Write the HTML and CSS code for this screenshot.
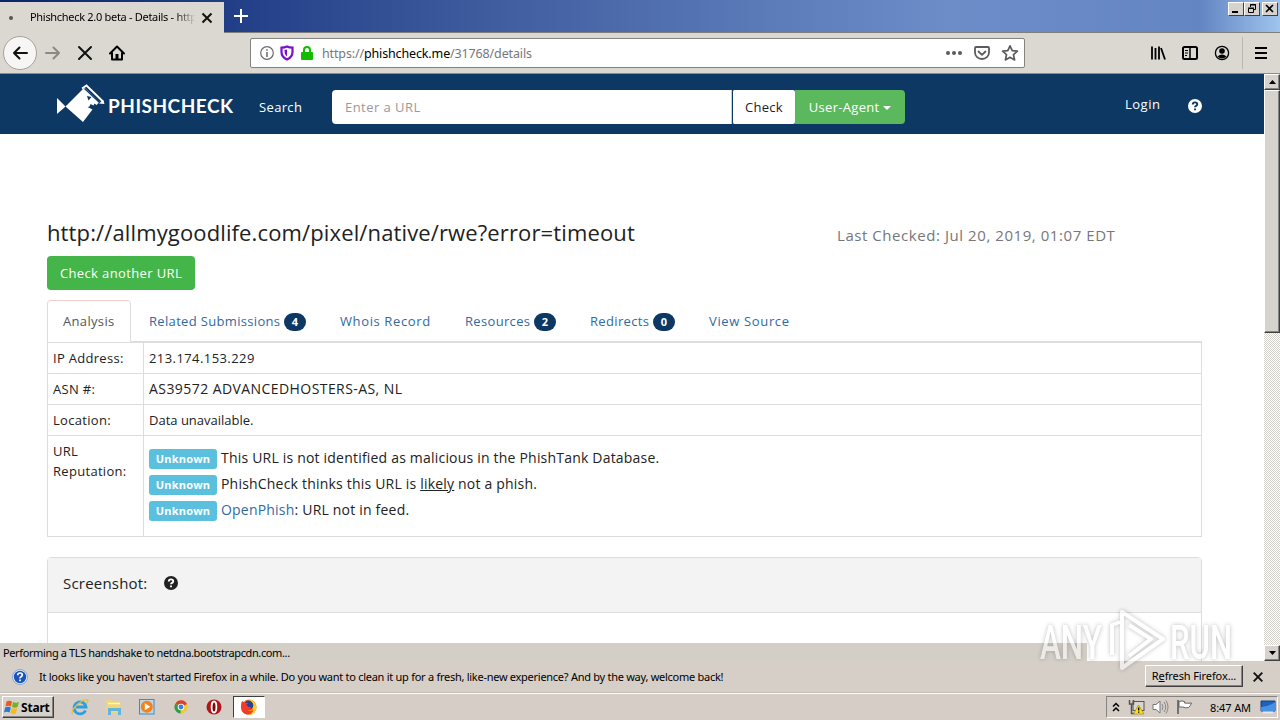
FILE: index.html
```html
<!DOCTYPE html>
<html lang="en">
<head>
  <meta charset="UTF-8">
  <meta name="viewport" content="width=device-width, initial-scale=1.0">
  <title>Phishcheck 2.0 beta - Details</title>
  <link rel="stylesheet" href="styles.css">
</head>
<body>
  <!-- Browser window -->
  <div class="titlebar">
    <div class="tab">
      <span class="tab-dot"></span>
      <span class="tab-title">Phishcheck 2.0 beta - Details - http</span>
      <svg class="tab-close" width="12" height="12" viewBox="0 0 12 12"><path d="M1.5 1.5l9 9M10.5 1.5l-9 9" stroke="#111" stroke-width="2"/></svg>
    </div>
    <svg class="new-tab" width="14" height="14" viewBox="0 0 14 14"><path d="M7 0v14M0 7h14" stroke="#fff" stroke-width="2"/></svg>
    <div class="window-buttons">
      <span class="win-btn"><svg width="14" height="12" viewBox="0 0 14 12"><path d="M3 9h6" stroke="#000" stroke-width="2"/></svg></span>
      <span class="win-btn"><svg width="14" height="12" viewBox="0 0 14 12"><path d="M5.500 4V1.500h5v5H9M5 2h6M3.500 5.500h5v4h-5zM3 5h6" fill="none" stroke="#000"/></svg></span>
      <span class="win-btn win-close"><svg width="14" height="12" viewBox="0 0 14 12"><path d="M3 2l7 7M10 2L3 9" stroke="#000" stroke-width="1.600"/></svg></span>
    </div>
  </div>

  <div class="toolbar">
    <span class="back"><svg width="16" height="16" viewBox="0 0 16 16"><path d="M15 8H2M7.500 2.500L2 8l5.500 5.500" fill="none" stroke="#111" stroke-width="2" stroke-linecap="round" stroke-linejoin="round"/></svg></span>
    <svg class="forward" width="16" height="16" viewBox="0 0 16 16"><path d="M1 8h13M8.500 2.500L14 8l-5.500 5.500" fill="none" stroke="#8b8985" stroke-width="2" stroke-linecap="round" stroke-linejoin="round"/></svg>
    <svg class="stop" width="16" height="16" viewBox="0 0 16 16"><path d="M2 2l12 12M14 2L2 14" stroke="#111" stroke-width="2" stroke-linecap="round"/></svg>
    <svg class="home" width="16" height="16" viewBox="0 0 16 16"><path d="M1 8.500L8 1.500l7 7M3 8v6.500h10V8" fill="none" stroke="#000" stroke-width="2" stroke-linecap="round" stroke-linejoin="round"/><path d="M6.500 14V9h3v5z" fill="#000"/></svg>

    <div class="urlbar">
      <svg width="14" height="14" viewBox="0 0 14 14"><circle cx="7" cy="7" r="6.300" fill="none" stroke="#6b6b6b" stroke-width="1.200"/><path d="M7 6v5M7 3.300v1.500" stroke="#6b6b6b" stroke-width="1.500"/></svg>
      <svg class="shield" width="14" height="16" viewBox="0 0 14 16"><path d="M7 1.500C5.500 2.200 3.500 2.600 1.500 2.600V7c0 3.500 2 6 5.500 7.500 3.500-1.500 5.500-4 5.500-7.500V2.600C10.500 2.600 8.500 2.200 7 1.500z" fill="#fff" stroke="#7a10c8" stroke-width="2.200"/><path d="M7 4.500v7C5 10 4.500 8.500 4.500 5z" fill="#7a10c8"/></svg>
      <svg class="lock" width="12" height="14" viewBox="0 0 12 14"><path d="M3 7V4a3 3 0 0 1 6 0v3" fill="none" stroke="#12bc00" stroke-width="2"/><rect y="6" width="12" height="8" rx="1" fill="#12bc00"/></svg>
      <span class="url">https://<b>phishcheck.me</b>/31768/details</span>
      <span class="url-actions">
        <svg width="16" height="16" viewBox="0 0 16 16" fill="#5b5b5b"><circle cx="2" cy="8" r="2"/><circle cx="8" cy="8" r="2"/><circle cx="14" cy="8" r="2"/></svg>
        <svg width="16" height="16" viewBox="0 0 16 16" fill="none" stroke="#5b5b5b" stroke-width="1.800" stroke-linecap="round" stroke-linejoin="round"><path d="M2 2h12q1 0 1 1v4.500a7 6.500 0 0 1-14 0V3q0-1 1-1z"/><path d="M4.500 6.500L8 9.800l3.500-3.300"/></svg>
        <svg width="18" height="18" viewBox="0 0 18 18"><path d="M9 1.800l2.200 4.800 5.200.6-3.900 3.500 1.100 5.200L9 13.300l-4.600 2.600 1.100-5.200-3.900-3.500 5.200-.6z" fill="none" stroke="#5b5b5b" stroke-width="1.700" stroke-linejoin="round"/></svg>
      </span>
    </div>

    <div class="tools">
      <svg width="16" height="16" viewBox="0 0 16 16"><path d="M2 1.500v13M5.500 3v11.500M9 1.500v13M11 3l4 11.500" stroke="#000" stroke-width="1.800"/></svg>
      <svg width="16" height="16" viewBox="0 0 16 16"><rect x="1" y="2" width="14" height="12" rx="1.500" fill="none" stroke="#000" stroke-width="2"/><path d="M8 2v12" stroke="#000" stroke-width="1.500"/><path d="M3 5.500h3M3 8h3M3 10.500h2" stroke="#000"/></svg>
      <svg width="16" height="16" viewBox="0 0 16 16"><circle cx="8" cy="8" r="6.600" fill="none" stroke="#000" stroke-width="1.300"/><circle cx="8" cy="6" r="2.800"/><path d="M3.500 11.500q4.500-4 9 0-4.500 4-9 0z"/></svg>
      <span class="divider"></span>
      <svg width="12" height="14" viewBox="0 0 12 14"><path d="M0 2h12M0 7h12M0 12h12" stroke="#000" stroke-width="2"/></svg>
    </div>
  </div>

  <!-- Web page -->
  <div class="viewport">
    <div class="page">
      <nav class="navbar">
        <svg class="logo" width="178" height="40" viewBox="0 0 178 40">
          <path d="M1 14l8.500 8.500L1 30z" fill="#fff"/>
          <path d="M28.500 3.500L43.500 18l-3 3-2-1.500-1 2-3-1.500-1 2.500-2 .5 5 2.500-9.500 12.500L9.500 22.500z" fill="#fff"/>
          <path d="M31 12l4.500 1-3 3.500z" fill="#0d3863"/>
          <path d="M26 4.500l4.500-3L47.500 18" fill="none" stroke="#fff" stroke-width="2"/>
          <path d="M28.500 4.500L44 19" stroke="#0d3863" stroke-width="1.200"/>
          <path d="M43 19.500l5.500.5-1.500-4z" fill="#fff"/>
          <text x="52" y="29" textLength="125" lengthAdjust="spacing">PHISHCHECK</text>
        </svg>
        <a class="nav-search">Search</a>
        <div class="search-group">
          <span class="search-input">Enter a URL</span>
          <button class="btn-check">Check</button>
          <button class="btn-agent">User-Agent <i class="caret"></i></button>
        </div>
        <a class="login">Login</a>
        <svg class="nav-help" width="14" height="14" viewBox="0 0 14 14"><circle cx="7" cy="7" r="7" fill="#fff"/><path d="M4.800 5.400q0-2 2.200-2t2.200 1.800q0 1-1.100 1.600T7 8.300M7 9.400v1.800" fill="none" stroke="#0d3863" stroke-width="1.900"/></svg>
      </nav>

      <main class="container">
        <div class="heading">
          <h1>http://allmygoodlife.com/pixel/native/rwe?error=timeout</h1>
          <span class="checked">Last Checked: Jul 20, 2019, 01:07 EDT</span>
        </div>
        <button class="btn-another">Check another URL</button>

        <ul class="tabs">
          <li class="active">Analysis</li>
          <li class="t-related">Related Submissions <span class="badge">4</span></li>
          <li class="t-whois">Whois Record</li>
          <li class="t-resources">Resources <span class="badge">2</span></li>
          <li class="t-redirects">Redirects <span class="badge">0</span></li>
          <li class="t-source">View Source</li>
        </ul>

        <table class="details">
          <tr><td class="key">IP Address:</td><td class="ip">213.174.153.229</td></tr>
          <tr><td>ASN #:</td><td class="asn">AS39572 ADVANCEDHOSTERS-AS, NL</td></tr>
          <tr><td>Location:</td><td class="location">Data unavailable.</td></tr>
          <tr>
            <td>URL Reputation:</td>
            <td class="reputation">
              <p><span class="label">Unknown</span> <span>This URL is not identified as malicious in the PhishTank Database.</span></p>
              <p><span class="label">Unknown</span> <span>PhishCheck thinks this URL is <u>likely</u> not a phish.</span></p>
              <p><span class="label">Unknown</span> <span><a>OpenPhish</a>: URL not in feed.</span></p>
            </td>
          </tr>
        </table>

        <div class="panel">
          <div class="panel-heading">
            <span>Screenshot:</span>
            <svg width="14" height="14" viewBox="0 0 14 14"><circle cx="7" cy="7" r="7" fill="#222"/><path d="M4.800 5.400q0-2 2.200-2t2.200 1.800q0 1-1.100 1.600T7 8.300M7 9.400v1.800" fill="none" stroke="#fff" stroke-width="1.900"/></svg>
          </div>
        </div>
      </main>
    </div>
    <div class="scrollbar">
      <span class="scroll-btn"><svg width="7" height="4" viewBox="0 0 7 4"><path d="M0 4h7L3.500 0z"/></svg></span>
      <span class="thumb"></span>
      <span class="scroll-btn scroll-down"><svg width="7" height="4" viewBox="0 0 7 4"><path d="M0 0h7L3.500 4z"/></svg></span>
    </div>
    <div class="status">Performing a TLS handshake to netdna.bootstrapcdn.com...</div>
  </div>

  <div class="infobar">
    <svg width="16" height="16" viewBox="0 0 16 16"><circle cx="8" cy="8" r="7.500" fill="#e8f0fa" stroke="#8aa6cf"/><circle cx="8" cy="8" r="6.200" fill="#1c53bd"/><path d="M5.700 6.300q0-2.300 2.300-2.300t2.300 2q0 1-1.200 1.700T8 9.300M8 10.400v1.900" fill="none" stroke="#fff" stroke-width="1.700"/></svg>
    <span class="info-text">It looks like you haven't started Firefox in a while. Do you want to clean it up for a fresh, like-new experience? And by the way, welcome back!</span>
    <button class="refresh">R<u>e</u>fresh Firefox...</button>
    <svg class="info-close" width="10" height="10" viewBox="0 0 10 10"><path d="M.7.7l8.600 8.600M9.300.7L.7 9.300" stroke="#111" stroke-width="1.900"/></svg>
  </div>

  <!-- Windows taskbar -->
  <div class="taskbar">
    <button class="start">
      <svg width="16" height="16" viewBox="0 0 16 16"><path d="M2.500 2.500Q5 .8 8 2.500L7 7.500Q4.500 6 1.500 7.500z" fill="#ee5a1c"/><path d="M9 3q3 1.500 6 0l-1.500 5Q11 9.500 8 8z" fill="#71b32b"/><path d="M1.200 8.500Q4 7 6.800 8.500l-1.200 5Q3 12 0 13.500z" fill="#2878d5"/><path d="M7.800 9q2.800 1.500 5.500 0l-1.500 5.500Q9 16 6.500 14z" fill="#fbbb17"/></svg>
      Start
    </button>
    <div class="launch">
      <svg width="18" height="18" viewBox="0 0 18 18"><path d="M14.500 12.500A6 6 0 1 1 15 9H5" fill="none" stroke="#2ca0df" stroke-width="2.800"/><path d="M1.500 16C-1 13 10 .5 16.500 2q1 1-1 4" fill="none" stroke="#e7bd3b" stroke-width="1.300"/></svg>
      <svg width="18" height="18" viewBox="0 0 18 18"><path d="M1.500 2h6l1.500 2h6.500v11h-14z" fill="#f1d676"/><path d="M3 5.500h12" stroke="#fff7ce" stroke-width="1.500"/><path d="M3 17v-7h13v7h-3v-4H6v4z" fill="#62b5df"/></svg>
      <svg width="18" height="18" viewBox="0 0 18 18"><rect x="1.500" y="1.500" width="14.500" height="14.500" fill="#b7d9f0" stroke="#408bc5"/><circle cx="8.800" cy="8.800" r="6" fill="#f58216"/><path d="M6.800 5.300v7l5.500-3.500z" fill="#fff"/></svg>
      <svg width="18" height="18" viewBox="0 0 18 18"><circle cx="9" cy="9" r="6.500" fill="#f5c929"/><path d="M9 9L3.400 5.700A6.500 6.500 0 0 1 15 6z" fill="#de3e31"/><path d="M9 9L3.300 5.800A6.500 6.500 0 0 0 8.500 15.500z" fill="#2b9c4c"/><circle cx="9" cy="9" r="3.300" fill="#fff"/><circle cx="9" cy="9" r="2.400" fill="#3f7ee0"/></svg>
      <svg width="18" height="18" viewBox="0 0 18 18"><circle cx="9" cy="9" r="7.500" fill="#b01618"/><ellipse cx="9" cy="9" rx="2.400" ry="5.500" fill="#7a0b0d" stroke="#fff" stroke-width="1.800"/></svg>
      <span class="running"><svg width="18" height="18" viewBox="0 0 18 18"><circle cx="9" cy="9.200" r="7.600" fill="#ff8a13"/><path d="M9 1.200q3 0 5 2.500 3 4 2 8Q14 17 9 17q5-3 4-7-1-3-4-4.500z" fill="#ffcf28"/><circle cx="8.500" cy="7.300" r="4.800" fill="#28429c"/><path d="M2 3l2.500 1.500L8 5 6.500 7l2 2 3 .5q-1 3-4 2.500 3 2 6 0-2 5-7 4.500Q1 15 1 9q0-4 1-6z" fill="#ef3c2c"/></svg></span>
    </div>
    <div class="tray">
      <svg width="8" height="10" viewBox="0 0 8 10"><path d="M1 4.500l3-3 3 3M1 9l3-3 3 3" fill="none" stroke="#000" stroke-width="1.500"/></svg>
      <svg class="net" width="17" height="16" viewBox="0 0 17 16"><rect x="5" y="2.500" width="11" height="9" fill="#d8d6d2" stroke="#555"/><path d="M1.500 1v4h4V1M3.500 5v9.500H7" fill="none" stroke="#555" stroke-width="1.500"/><path d="M10.500 6L16 15H5.500z" fill="#ffdf18" stroke="#a98900" stroke-width=".7"/><path d="M10.700 8.500v3M10.700 12.500v1.200" stroke="#000" stroke-width="1.300"/></svg>
      <svg class="vol" width="17" height="16" viewBox="0 0 17 16"><path d="M1 5.500h3L8 2v12l-4-3.500H1z" fill="#fff" stroke="#777"/><path d="M10 5q2 3 0 6M12 3q3.500 5 0 10M14 1.500q4 6.500 0 13" fill="none" stroke="#888"/></svg>
      <svg class="flag" width="17" height="16" viewBox="0 0 17 16"><path d="M3 2.500q3-1 5.500 0V4q3 .5 7 0-1 3-3 4.500-3 1-5.500-.5H3z" fill="#fff" stroke="#666"/><path d="M2 1v14" stroke="#555" stroke-width="1.500"/></svg>
      <span class="clock">8:47 AM</span>
      <svg width="16" height="14" viewBox="0 0 16 14"><path d="M1 1h14v10H1z" fill="#1d62c0" stroke="#123e7c"/><path d="M1 7q7 0 14-5v9H1z" fill="#4a92e0"/><path d="M3 12.500h10" stroke="#dfe7ef" stroke-width="2"/></svg>
    </div>
  </div>

  <svg class="watermark" width="200" height="70" viewBox="0 0 200 70">
    <text x="4" y="54" textLength="62" lengthAdjust="spacingAndGlyphs">ANY</text>
    <path d="M76 50V20l8-3M86 7v56l41-29zM93 20l22 14-22 17"/>
    <text x="134" y="54" textLength="62" lengthAdjust="spacingAndGlyphs">RUN</text>
  </svg>
</body>
</html>
```
FILE: styles.css
```css
* {
  box-sizing: border-box;
}
body {
  margin: 0;
  height: 720px;
  overflow: hidden;
  display: flex;
  flex-direction: column;
  font-family: "Noto Sans", sans-serif;
  font-size: 11px;
  color: #000;
  background: #d5cec7;
}
svg {
  display: block;
  flex: none;
  overflow: visible;
}
button {
  font-family: inherit;
  margin: 0;
  white-space: nowrap;
}
.titlebar {
  height: 33px;
  flex: none;
  display: flex;
  background: linear-gradient(90deg, #0b2569 0, #223e87 230px, #4b69a9 600px, #6d8dc9 950px, #6385c2 1200px, #9fc4ee 1280px);
  border-bottom: 1px solid #807f7c;
}
.tab {
  width: 224px;
  height: 31px;
  margin-top: 2px;
  padding-left: 9px;
  display: flex;
  align-items: center;
  background: #dbd8d2;
}
.tab-dot {
  width: 4px;
  height: 4px;
  border-radius: 50%;
  background: #555;
  margin-right: 17px;
}
.tab-title {
  width: 165px;
  margin-top: -2px;
  white-space: nowrap;
  letter-spacing: -0.3px;
  -webkit-mask-image: linear-gradient(90deg, #000 145px, transparent 166px);
}
.tab-close {
  margin-left: 6px;
}
.new-tab {
  margin: 9px 0 0 10px;
}
.window-buttons {
  margin: 2px 2px 0 auto;
  display: flex;
}
.win-btn {
  width: 16px;
  height: 14px;
  background: #d6d3ce;
  border: 1px solid;
  border-color: #fff #404040 #404040 #fff;
}
.win-close {
  margin-left: 2px;
}
.toolbar {
  height: 41px;
  flex: none;
  display: flex;
  align-items: center;
  background: #dbd8d2;
  border-bottom: 1px solid #8a8d90;
}
.back {
  width: 34px;
  height: 34px;
  margin-left: 3px;
  border: 1px solid #a5a29d;
  border-radius: 50%;
  background: #f7f6f5;
  display: flex;
  align-items: center;
  justify-content: center;
}
.forward {
  margin-left: 8px;
}
.stop, .home {
  margin-left: 16px;
}
.urlbar {
  width: 775px;
  height: 30px;
  margin-left: 125px;
  padding: 0 5px 0 9px;
  display: flex;
  align-items: center;
  background: #fff;
  border: 1px solid #85837f;
  border-radius: 2px;
}
.shield {
  margin-left: 6px;
}
.lock {
  margin-left: 7px;
}
.url {
  margin-left: 9px;
  font-size: 12.5px;
  letter-spacing: -0.14px;
  color: #777;
}
.url b {
  font-weight: 400;
  color: #000;
}
.url-actions {
  margin-left: auto;
  display: flex;
  align-items: center;
  gap: 12px;
}
.url-actions svg:last-child {
  margin-left: -1px;
}
.tools {
  margin: 0 13px 0 auto;
  display: flex;
  align-items: center;
  gap: 16px;
}
.divider {
  width: 1px;
  height: 32px;
  margin: 0 -4px 0 -4px;
  background: #bbb8b2;
}
.viewport {
  height: 587px;
  flex: none;
  display: flex;
  position: relative;
  overflow: hidden;
}
.page {
  width: 1264px;
  background: #fff;
  font-family: "Open Sans", sans-serif;
  font-size: 14px;
  line-height: 20px;
  color: #222;
}
.navbar {
  height: 60px;
  padding-left: 56px;
  display: flex;
  align-items: flex-start;
  background: #0d3863;
  color: #fff;
}
.logo {
  margin-top: 10px;
}
.logo text {
  font-family: Lato, sans-serif;
  font-size: 19px;
  font-weight: 700;
  fill: #fff;
}
.nav-search {
  width: 73px;
  margin: 23px 0 0 25px;
  font-size: 13px;
  letter-spacing: 0.35px;
}
.search-group {
  height: 34px;
  margin-top: 16px;
  display: flex;
}
.search-input {
  width: 400px;
  padding: 7px 13px;
  background: #fff;
  color: #999;
  border-right: 1px solid #ccc;
  border-radius: 4px 0 0 4px;
  font-size: 13px;
  letter-spacing: 0.45px;
}
.btn-check, .btn-agent {
  border: 0;
  padding: 0;
  font-size: 13px;
  letter-spacing: 0.3px;
}
.btn-check {
  width: 63px;
  background: #fff;
  color: #222;
  border-left: 1px solid #0d3863;
  border-radius: 2px;
}
.btn-agent {
  width: 110px;
  background: #5cb85c;
  color: #fff;
  border-radius: 0 4px 4px 0;
}
.caret {
  display: inline-block;
  border: 4px solid transparent;
  border-top-color: #fff;
  border-bottom: 0;
  vertical-align: 2px;
}
.login {
  margin: 20px 0 0 220px;
  width: 63px;
  font-size: 13px;
  letter-spacing: 0.5px;
}
.nav-help {
  margin-top: 25px;
}
.container {
  width: 1155px;
  margin-left: 47px;
  padding-top: 85px;
}
.heading {
  height: 37px;
  display: flex;
}
h1 {
  width: 790px;
  margin: 0;
  font-size: 22px;
  font-weight: 400;
  letter-spacing: 0.13px;
  line-height: 26px;
  white-space: nowrap;
}
.checked {
  margin-top: 6px;
  font-size: 15px;
  letter-spacing: 0.56px;
  color: #777;
  white-space: nowrap;
}
.btn-another {
  display: block;
  width: 148px;
  height: 34px;
  border: 0;
  border-radius: 4px;
  background: #43b549;
  color: #fff;
  font-size: 13px;
  letter-spacing: 0.37px;
}
.tabs {
  height: 42px;
  margin: 10px 0 0;
  padding: 0;
  display: flex;
  list-style: none;
  font-size: 13px;
  letter-spacing: 0.33px;
  color: #316aa3;
}
.tabs li {
  padding-top: 11px;
  white-space: nowrap;
  border-bottom: 1px solid #ddd;
}
.tabs .active {
  width: 84px;
  height: 43px;
  padding-left: 15px;
  padding-top: 10px;
  border: 1px solid #ddd;
  border-top-color: #f3cfcb;
  border-bottom: 0;
  border-radius: 4px 4px 0 0;
  color: #555;
}
.tabs .t-related {
  width: 209px;
  padding-left: 18px;
}
.tabs .t-whois {
  width: 125px;
  letter-spacing: 0.62px;
}
.t-resources {
  width: 125px;
}
.t-redirects {
  width: 119px;
}
.t-source {
  flex: 1;
  letter-spacing: 0.65px;
}
.badge {
  float: right;
  width: 22px;
  height: 18px;
  margin: 2px 34px 0 0;
  border-radius: 10px;
  background: #0d3863;
  color: #fff;
  font-size: 11px;
  font-weight: 700;
  letter-spacing: 0;
  line-height: 18px;
  text-align: center;
}
.details {
  width: 1155px;
  border-collapse: collapse;
  table-layout: fixed;
  font-size: 13px;
  letter-spacing: 0.3px;
}
.details td {
  height: 31px;
  padding: 5px;
  border: 1px solid #ddd;
  vertical-align: top;
}
.details .key {
  width: 96px;
}
.details .ip {
  letter-spacing: 0.42px;
}
.details .asn {
  font-size: 14px;
  letter-spacing: 0.43px;
}
.details .location {
  letter-spacing: 0;
}
.details .reputation {
  height: 101px;
  padding-top: 8px;
  font-size: 14px;
  letter-spacing: 0.2px;
}
.reputation p {
  height: 26px;
  margin: 0;
  line-height: 27px;
  display: flex;
}
.reputation a {
  color: #316aa3;
}
.label {
  width: 68px;
  height: 20px;
  margin: 5px 4px 0 0;
  border-radius: 3px;
  background: #5bc0de;
  color: #fff;
  font-size: 11px;
  font-weight: 700;
  line-height: 19px;
  text-align: center;
}
.panel {
  height: 200px;
  margin-top: 20px;
  border: 1px solid #ddd;
  border-radius: 4px;
}
.panel-heading {
  height: 55px;
  padding: 0 15px 4px;
  display: flex;
  align-items: center;
  gap: 17px;
  background: #f3f3f3;
  border-bottom: 1px solid #ddd;
  font-size: 15px;
  letter-spacing: 0.2px;
}
.scrollbar {
  width: 16px;
  display: flex;
  flex-direction: column;
  background: repeating-conic-gradient(#fff 0 25%, #d6d3ce 0 50%) 0 0 / 2px 2px;
}
.scroll-btn, .thumb {
  background: #d6d3ce;
  border: 1px solid;
  border-color: #fff #404040 #404040 #fff;
  box-shadow: inset -1px -1px #868480;
}
.scroll-btn {
  height: 16px;
  display: flex;
  align-items: center;
  justify-content: center;
}
.thumb {
  height: 243px;
}
.scroll-down {
  margin-top: auto;
}
.status {
  position: absolute;
  left: 0;
  bottom: 0;
  width: 1087px;
  height: 18px;
  padding-left: 3px;
  line-height: 20px;
  letter-spacing: -0.38px;
  background: #d3cec6;
}
.infobar {
  height: 32px;
  flex: none;
  padding: 0 17px 0 12px;
  display: flex;
  align-items: center;
  background: #d6cfc8;
  border-bottom: 1px solid #c5beb7;
}
.info-text {
  margin-left: 11px;
  letter-spacing: -0.27px;
  white-space: nowrap;
}
.refresh {
  width: 98px;
  height: 22px;
  margin: 0 10px 2px auto;
  padding: 0;
  font-size: 11px;
  letter-spacing: -0.1px;
  background: #d8d3cc;
  border: 1px solid;
  border-color: #fff #404040 #404040 #fff;
  box-shadow: inset -1px -1px #868480;
}
.taskbar {
  height: 27px;
  flex: none;
  display: flex;
  align-items: flex-start;
  padding: 2px 2px 0;
  background: #d5cdc6;
  border-top: 1px solid #fff;
}
.start {
  width: 52px;
  height: 22px;
  padding: 0 0 0 1px;
  display: flex;
  align-items: center;
  gap: 1px;
  font-size: 12px;
  font-weight: 700;
  letter-spacing: -0.2px;
  background: #d6d1ca;
  border: 1px solid;
  border-color: #fff #404040 #404040 #fff;
  box-shadow: inset -1px -1px #868480;
}
.launch {
  height: 22px;
  margin-left: 17px;
  display: flex;
  align-items: center;
  gap: 15.6px;
}
.running {
  width: 32px;
  height: 22px;
  margin-left: -6px;
  display: flex;
  align-items: center;
  justify-content: center;
  background: #fff;
  border: 1px solid;
  border-color: #404040 #fff #fff #404040;
}
.tray {
  width: 172px;
  height: 22px;
  margin-left: auto;
  padding: 0 1px 0 5px;
  display: flex;
  align-items: center;
  border: 1px solid;
  border-color: #868480 #fff #fff #868480;
}
.net {
  margin-left: 8px;
}
.vol, .flag {
  margin-left: 7px;
}
.clock {
  margin: 0 9px 0 auto;
  letter-spacing: -0.1px;
}
.watermark {
  position: absolute;
  left: 1036px;
  top: 605px;
  filter: drop-shadow(0 0 2px rgba(70, 70, 70, .6));
  opacity: .6;
}
.watermark text {
  font-family: Roboto, sans-serif;
  font-size: 48px;
  font-weight: 500;
  fill: #fff;
}
.watermark path {
  fill: none;
  stroke: #fff;
  stroke-width: 4;
  stroke-linejoin: round;
}
```
